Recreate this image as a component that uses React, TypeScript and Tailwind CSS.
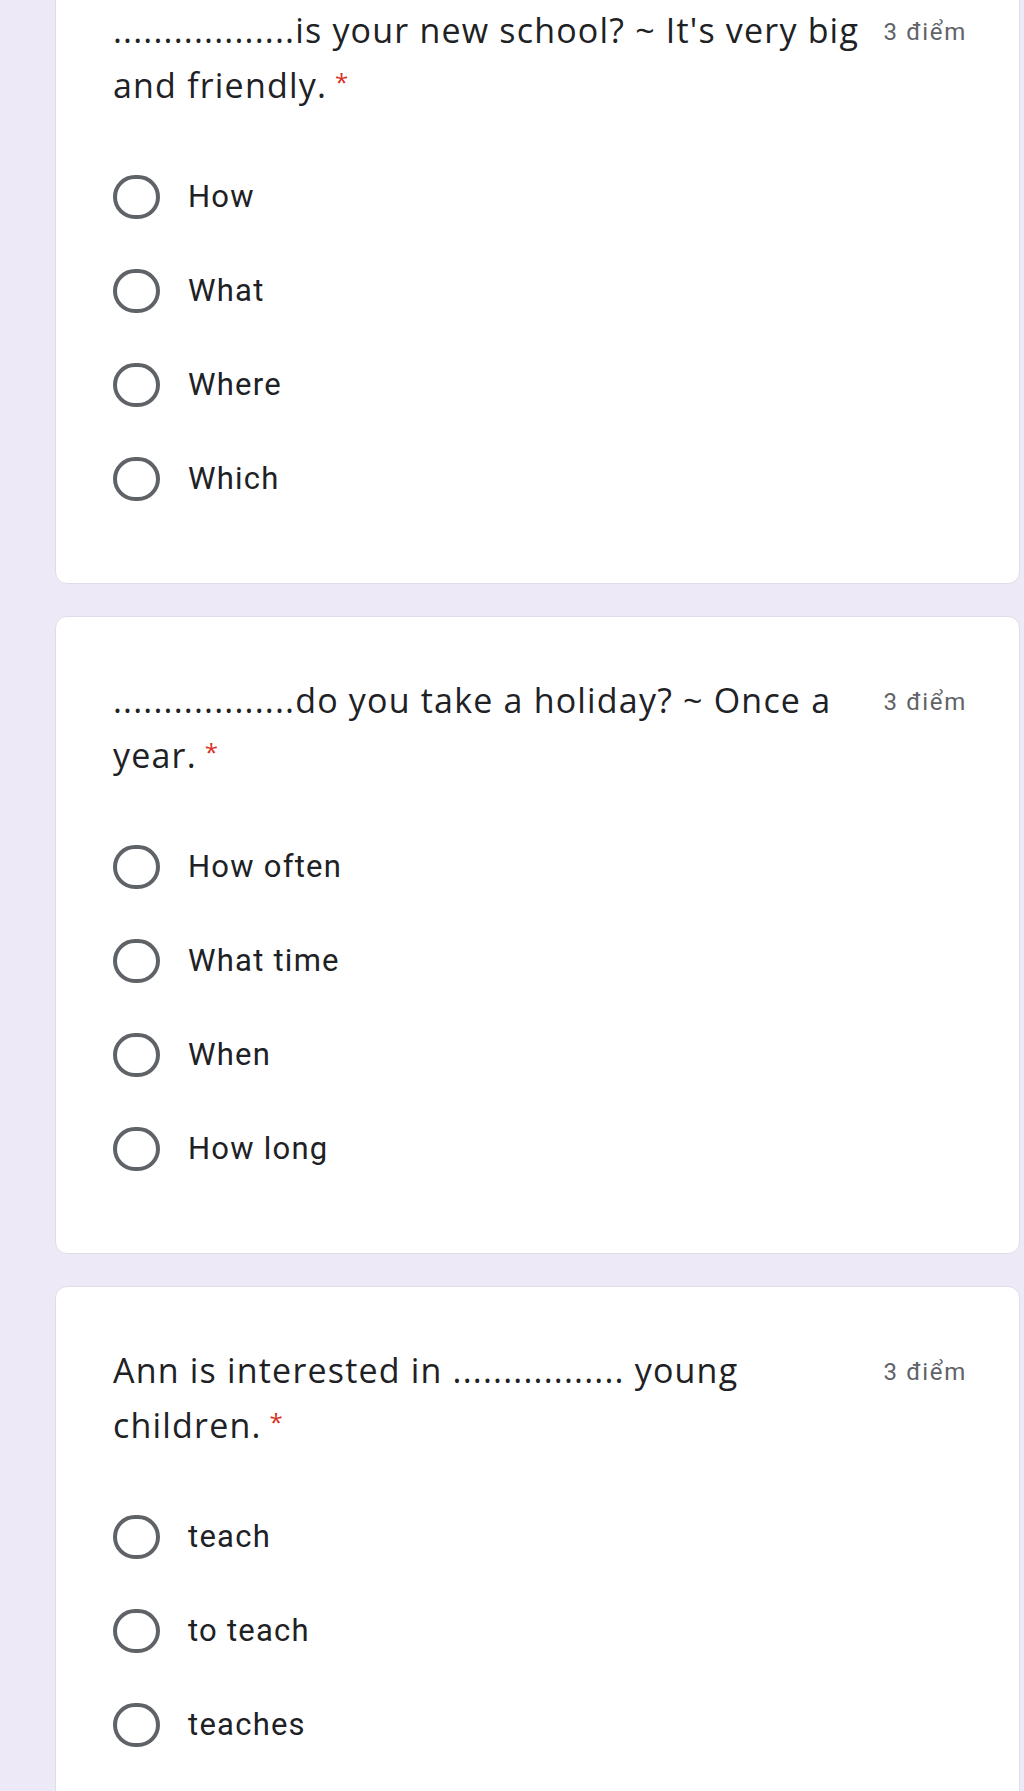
const QUESTIONS = [
  {
    id: "q1",
    text: "..................is your new school? ~ It's very big and friendly.",
    options: ["How", "What", "Where", "Which"],
  },
  {
    id: "q2",
    text: "..................do you take a holiday? ~ Once a year.",
    options: ["How often", "What time", "When", "How long"],
  },
  {
    id: "q3",
    text: "Ann is interested in ................. young children.",
    options: ["teach", "to teach", "teaches"],
  },
];

function Radio() {
  return (
    <span className="block w-[47px] h-[44px] shrink-0 rounded-full border-[4px] border-[#5f6368]" />
  );
}

function QuestionCard({ q }: { q: (typeof QUESTIONS)[number] }) {
  return (
    <section className="bg-white rounded-[12px] border border-[#e0dde8] pl-[57px] pr-[52px] pt-[56px] pb-[57px]">
      <div className="flex items-start gap-[8px]">
        <p className="flex-1 font-['Open_Sans',sans-serif] text-[34px] leading-[55px] text-[#202124] tracking-[0.035em]">
          {q.text}
          <span className="relative -top-[7px] ml-[8px] text-[24px] leading-none text-[#d93025]">*</span>
        </p>
        <span className="mt-[16px] font-['Roboto',sans-serif] text-[24px] leading-[26px] text-[#5f6368] tracking-[0.07em] whitespace-nowrap">
          3 điểm
        </span>
      </div>
      <ul className="mt-[37px]">
        {q.options.map((o) => (
          <li key={o} className="h-[94px] flex items-center gap-[28px]">
            <Radio />
            <span className="font-['Roboto',sans-serif] text-[31px] text-[#202124] tracking-[0.04em]">
              {o}
            </span>
          </li>
        ))}
      </ul>
    </section>
  );
}

export default function App() {
  return (
    <div className="h-[1791px] overflow-hidden bg-[#ede9f7] pl-[55px] pr-[4px]">
      <div className="-mt-[54px] flex flex-col gap-[32px]">
        {QUESTIONS.map((q) => (
          <QuestionCard key={q.id} q={q} />
        ))}
      </div>
    </div>
  );
}
